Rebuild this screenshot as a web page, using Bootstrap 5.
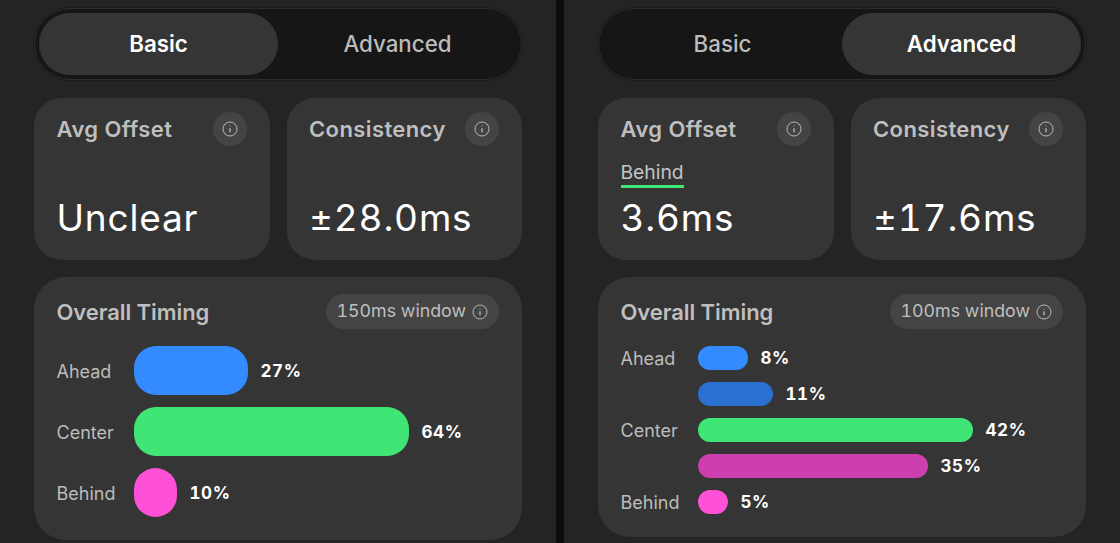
<!DOCTYPE html>
<html lang="en">
<head>
<meta charset="utf-8">
<title>Timing stats</title>
<link href="https://cdn.jsdelivr.net/npm/bootstrap@5.3.0/dist/css/bootstrap.min.css" rel="stylesheet">
<style>
html,body{margin:0;height:543px;overflow:hidden;background:#0d0d0d}
body{font-family:Inter,"Liberation Sans",sans-serif;color:#fff}
.shell{width:1120px;height:543px;gap:8px}
.pane{width:556px;height:543px;background:#242424;padding:8px 0 0 34px;flex:none}
.switcher{width:488px;height:72px;background:#161616;border:1px solid #2c2c2c;border-radius:36px;padding:4px;box-shadow:0 0 0 1px #1b1b1b}
.seg{flex:1 1 0;height:62px;border-radius:31px;font-size:22.3px;font-weight:500;color:#bcbcbc;border:0;background:transparent;padding:0}
.seg.on{background:#353535;color:#fff;font-weight:580}
.duo{gap:17px;margin-top:18px}
.tile{width:235.5px;height:162px;background:#353535;border-radius:28px;padding:15px 23px 0 22.5px}
.tile-head{height:32px}
.tile-title{font-size:22px;font-weight:600;color:#bfbfbf;line-height:32px;letter-spacing:.4px}
.info{width:34px;height:34px;border-radius:50%;background:#444;flex:none}
.info svg,.chip svg{display:block}
.sub-wrap{height:36px;margin-top:11px;padding-top:4px}
.sub{font-size:19.3px;line-height:25px;color:#c4c4c4;display:inline-block;border-bottom:3px solid #3fe673}
.big{font-size:37px;font-weight:400;line-height:44px;letter-spacing:.8px;color:#fff;margin-top:4px;white-space:nowrap;font-feature-settings:"tnum" 1}
.timing{width:488px;background:#353535;border-radius:32px;margin-top:17px;padding:17px 23px 0 22.5px}
.timing.tall{height:263px}
.timing.short{height:260px}
.timing-title{font-size:22px;font-weight:600;color:#bfbfbf;line-height:34px;letter-spacing:-.07px}
.chip{height:35px;border-radius:18px;background:#444;padding:0 11px;gap:6px;font-size:17.8px;color:#bfbfbf;font-feature-settings:"tnum" 1}
.rows{margin-top:17px}
.rows.fat{gap:12px}
.rows.thin{gap:12px}
.line{display:flex;align-items:center}
.fat .line{height:49px}
.thin .line{height:24px}
.lbl{width:77.5px;flex:none;font-size:18px;color:#bcbcbc;white-space:nowrap}
.fat .lbl,.pct{padding-top:2px}
.bar{height:100%;flex:none}
.fat .bar{border-radius:22px}
.thin .bar{border-radius:12px}
.pct{margin-left:12.5px;font-size:17px;font-weight:700;letter-spacing:.6px;color:#fff;font-feature-settings:"tnum" 1}
.c-blue{background:#338bff}
.c-blue2{background:#2a70d1}
.c-green{background:#40e675}
.c-pink{background:#ff50d8}
.c-pink2{background:#cd3fae}
</style>
</head>
<body>
<div class="shell d-flex">
  <section class="pane">
    <div class="switcher d-flex">
      <button class="seg on" type="button">Basic</button>
      <button class="seg" type="button">Advanced</button>
    </div>
    <div class="duo d-flex">
      <div class="tile">
        <div class="tile-head d-flex justify-content-between align-items-center"><span class="tile-title">Avg Offset</span>
          <span class="info d-flex align-items-center justify-content-center"><svg width="16" height="16" viewBox="0 0 16 16" fill="none" stroke="#b8b8b8"><circle cx="8" cy="8" r="7"/><path d="M8 7.3v4" stroke-width="1.3"/><circle cx="8" cy="5" r=".6" fill="#b8b8b8" stroke="none"/></svg></span></div>
        <div class="sub-wrap"></div>
        <div class="big">Unclear</div>
      </div>
      <div class="tile">
        <div class="tile-head d-flex justify-content-between align-items-center"><span class="tile-title">Consistency</span>
          <span class="info d-flex align-items-center justify-content-center"><svg width="16" height="16" viewBox="0 0 16 16" fill="none" stroke="#b8b8b8"><circle cx="8" cy="8" r="7"/><path d="M8 7.3v4" stroke-width="1.3"/><circle cx="8" cy="5" r=".6" fill="#b8b8b8" stroke="none"/></svg></span></div>
        <div class="sub-wrap"></div>
        <div class="big">±28.0ms</div>
      </div>
    </div>
    <div class="timing tall">
      <div class="d-flex justify-content-between align-items-center"><span class="timing-title">Overall Timing</span>
        <span class="chip d-flex align-items-center">150ms window <svg width="16" height="16" viewBox="0 0 16 16" fill="none" stroke="#b8b8b8"><circle cx="8" cy="8" r="7"/><path d="M8 7.3v4" stroke-width="1.3"/><circle cx="8" cy="5" r=".6" fill="#b8b8b8" stroke="none"/></svg></span></div>
      <div class="rows fat d-flex flex-column">
        <div class="line"><span class="lbl">Ahead</span><span class="bar c-blue" style="width:114px"></span><span class="pct">27%</span></div>
        <div class="line"><span class="lbl">Center</span><span class="bar c-green" style="width:275px"></span><span class="pct">64%</span></div>
        <div class="line"><span class="lbl">Behind</span><span class="bar c-pink" style="width:43px"></span><span class="pct">10%</span></div>
      </div>
    </div>
  </section>
  <section class="pane">
    <div class="switcher d-flex">
      <button class="seg" type="button">Basic</button>
      <button class="seg on" type="button">Advanced</button>
    </div>
    <div class="duo d-flex">
      <div class="tile">
        <div class="tile-head d-flex justify-content-between align-items-center"><span class="tile-title">Avg Offset</span>
          <span class="info d-flex align-items-center justify-content-center"><svg width="16" height="16" viewBox="0 0 16 16" fill="none" stroke="#b8b8b8"><circle cx="8" cy="8" r="7"/><path d="M8 7.3v4" stroke-width="1.3"/><circle cx="8" cy="5" r=".6" fill="#b8b8b8" stroke="none"/></svg></span></div>
        <div class="sub-wrap"><span class="sub">Behind</span></div>
        <div class="big">3.6ms</div>
      </div>
      <div class="tile">
        <div class="tile-head d-flex justify-content-between align-items-center"><span class="tile-title">Consistency</span>
          <span class="info d-flex align-items-center justify-content-center"><svg width="16" height="16" viewBox="0 0 16 16" fill="none" stroke="#b8b8b8"><circle cx="8" cy="8" r="7"/><path d="M8 7.3v4" stroke-width="1.3"/><circle cx="8" cy="5" r=".6" fill="#b8b8b8" stroke="none"/></svg></span></div>
        <div class="sub-wrap"></div>
        <div class="big">±17.6ms</div>
      </div>
    </div>
    <div class="timing short">
      <div class="d-flex justify-content-between align-items-center"><span class="timing-title">Overall Timing</span>
        <span class="chip d-flex align-items-center">100ms window <svg width="16" height="16" viewBox="0 0 16 16" fill="none" stroke="#b8b8b8"><circle cx="8" cy="8" r="7"/><path d="M8 7.3v4" stroke-width="1.3"/><circle cx="8" cy="5" r=".6" fill="#b8b8b8" stroke="none"/></svg></span></div>
      <div class="rows thin d-flex flex-column">
        <div class="line"><span class="lbl">Ahead</span><span class="bar c-blue" style="width:50px"></span><span class="pct">8%</span></div>
        <div class="line"><span class="lbl"></span><span class="bar c-blue2" style="width:75px"></span><span class="pct">11%</span></div>
        <div class="line"><span class="lbl">Center</span><span class="bar c-green" style="width:275px"></span><span class="pct">42%</span></div>
        <div class="line"><span class="lbl"></span><span class="bar c-pink2" style="width:230px"></span><span class="pct">35%</span></div>
        <div class="line"><span class="lbl">Behind</span><span class="bar c-pink" style="width:30px"></span><span class="pct">5%</span></div>
      </div>
    </div>
  </section>
</div>
<script src="https://cdn.jsdelivr.net/npm/bootstrap@5.3.0/dist/js/bootstrap.bundle.min.js"></script>
</body>
</html>
